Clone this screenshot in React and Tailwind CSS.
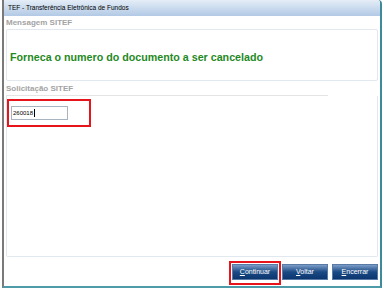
import React from 'react'

const font = { fontFamily: '"Liberation Sans", Arial, sans-serif' }

function WinButton({ label, first }) {
  return (
    <button className="w-[46px] h-[16px] border border-[#5a7aa6] bg-gradient-to-b from-[#7b9dc8] via-[#1a4a84] to-[#0c3670] text-white text-[7px] leading-none flex items-center justify-center">
      <span><span className="underline">{first}</span>{label.slice(first.length)}</span>
    </button>
  )
}

export default function App() {
  return (
    <div className="w-[384px] h-[292px] bg-white relative overflow-hidden" style={font}>
      <div className="absolute left-[2px] top-0 w-[380px] h-[288px] border-l-2 border-[#7a7a7a] border-r-2 border-r-[#3e8a9a] border-b-2 border-b-[#4d9aa8] rounded-tr-[4px] bg-white flex flex-col">
        {/* title bar */}
        <div className="h-[16px] bg-gradient-to-b from-[#e4edf7] to-[#b2c9e5] flex items-center pl-[4px] text-[6.5px] text-black rounded-tr-[3px]">
          TEF - Transferência Eletrônica de Fundos
        </div>

        <div className="flex-1 flex flex-col pl-[2px] pr-[2px]">
          <div className="text-[8px] font-bold text-[#a3a3a3] mt-[2px] leading-[10px]">Mensagem SITEF</div>
          <div className="mt-[1px] h-[52px] border border-[#e2e8ef] rounded-[2px] flex items-center pl-[3px] pt-[4px]">
            <span className="text-[10.7px] font-bold text-[#1f8a1f]">Forneca o numero do documento a ser cancelado</span>
          </div>

          <div className="text-[8px] font-bold text-[#a3a3a3] mt-[3px] leading-[10px] w-[322px] border-b border-[#e4e4e4] pb-[1px]">Solicitação SITEF</div>

          <div className="flex-1 border border-[#e2e8ef] border-t-0 rounded-b-[2px] pt-[3px]">
            <div className="w-[84px] h-[28px] border-2 border-[#e8141c] flex items-center pl-[2px]">
              <div className="w-[57px] h-[14px] border border-[#a8b4c0] bg-white text-[6px] text-black flex items-center pl-[1px]">
                260018<span className="inline-block w-px h-[8px] bg-black ml-px" />
              </div>
            </div>
          </div>

          <div className="h-[29px] flex items-center justify-end gap-[4px] pr-[0px]">
            <div className="relative">
              <WinButton label="Continuar" first="C" />
              <div className="absolute -left-[3px] -right-[3px] -top-[3px] -bottom-[5px] border-2 border-[#e8141c]" />
            </div>
            <WinButton label="Voltar" first="V" />
            <WinButton label="Encerrar" first="E" />
          </div>
        </div>
      </div>
    </div>
  )
}
